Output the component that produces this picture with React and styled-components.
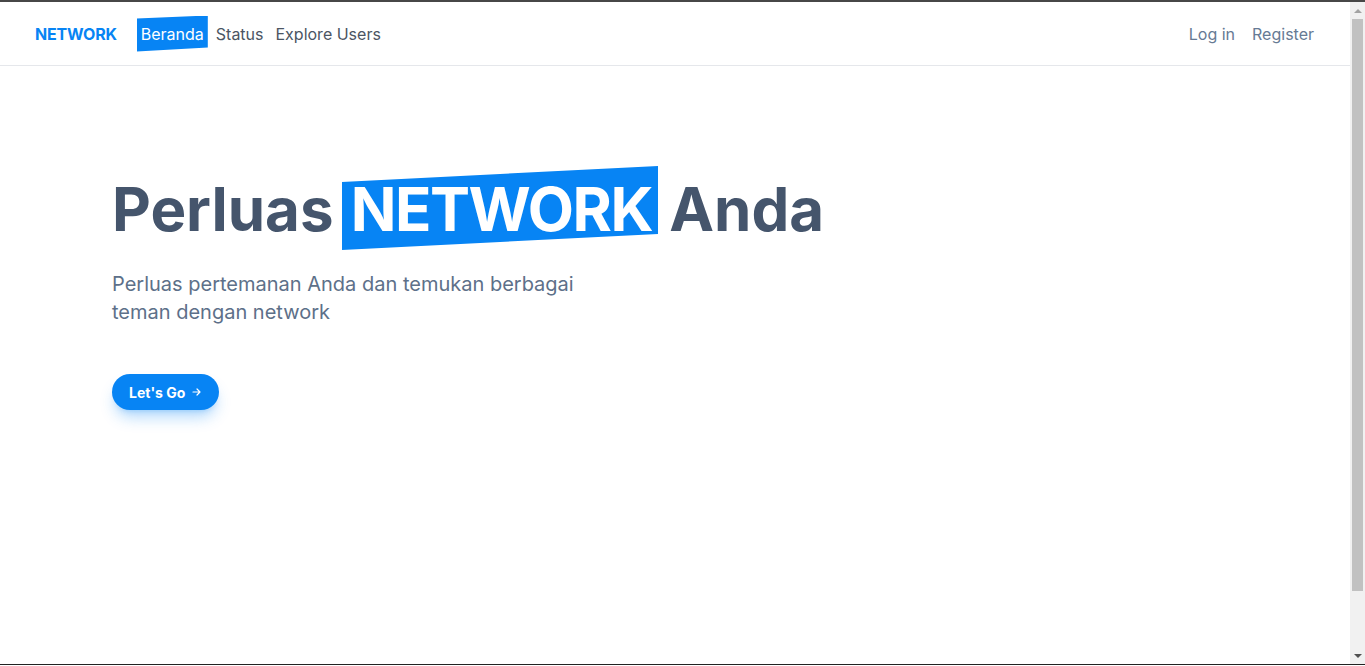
import React from "react";
import styled, { createGlobalStyle } from "styled-components";

const Global = createGlobalStyle`
  html, body { margin: 0; padding: 0; height: 100%; overflow: hidden; }
  body {
    font-family: Inter, "Noto Sans", "Liberation Sans", sans-serif;
    background: #ffffff;
    border-top: 2px solid #474747;
    -webkit-font-smoothing: antialiased;
  }
  #root { height: 100%; }
  * { box-sizing: border-box; }
`;

const BLUE = "#0784f4";

const Window = styled.div`
  display: flex;
  height: calc(100% - 1px);
  border-bottom: 1px solid #222;
`;

const Page = styled.div`
  flex: 1;
  min-width: 0;
  display: flex;
  flex-direction: column;
`;

const Nav = styled.nav`
  height: 64px;
  border-bottom: 1px solid #e5e7eb;
  display: flex;
  align-items: center;
  justify-content: space-between;
  padding: 0 32px 0 35px;
`;

const Left = styled.div`
  display: flex;
  align-items: center;
`;

const Logo = styled.a`
  font-weight: 700;
  font-size: 16px;
  color: ${BLUE};
  text-decoration: none;
  margin-right: 20px;
  letter-spacing: -0.2px;
`;

const Links = styled.div`
  display: flex;
  align-items: center;
  gap: 4px;
`;

const NavLink = styled.a`
  font-size: 16px;
  line-height: 24px;
  padding: 6px 4px;
  text-decoration: none;
  color: ${(p) => (p.$active ? "#ffffff" : p.$muted ? "#667a94" : "#4b5563")};
  background: ${(p) => (p.$active ? BLUE : "transparent")};
  clip-path: ${(p) =>
    p.$active ? "polygon(0 8%, 100% 0, 100% 89%, 0 100%)" : "none"};
`;

const Right = styled.div`
  display: flex;
  align-items: center;
  gap: 9px;
`;

const Hero = styled.main`
  flex: 1;
  padding: 100px 112px 0;
  display: flex;
  flex-direction: column;
  align-items: flex-start;
`;

const Title = styled.h1`
  margin: 0;
  font-size: 60px;
  line-height: 1;
  font-weight: 700;
  color: #45556c;
  letter-spacing: 0;
`;

const Highlight = styled.span`
  display: inline-block;
  background: ${BLUE};
  color: #ffffff;
  letter-spacing: -1.5px;
  padding: 13px 6px 11px 9px;
  margin: 0 -3px 0 -6px;
  clip-path: polygon(0 19%, 100% 0, 100% 81%, 0 100%);
`;

const Subtitle = styled.p`
  margin: 20px 0 0;
  max-width: 512px;
  font-size: 20px;
  line-height: 28px;
  color: #5d7089;
`;

const Button = styled.button`
  margin-top: 48px;
  height: 36px;
  padding: 0 18px 0 17px;
  border: none;
  border-radius: 999px;
  background: ${BLUE};
  color: #ffffff;
  font-family: inherit;
  font-size: 14px;
  font-weight: 700;
  display: flex;
  align-items: center;
  gap: 7px;
  box-shadow: 0 10px 15px -3px rgba(7, 132, 244, 0.3),
    0 4px 6px -4px rgba(7, 132, 244, 0.3);
  cursor: pointer;
`;

const Arrow = () => (
  <svg width="9" height="8" viewBox="0 0 9 8" fill="none" stroke="currentColor" strokeWidth="1.2" strokeLinecap="round" strokeLinejoin="round">
    <path d="M1 4h7M5 1l3 3-3 3" />
  </svg>
);

const Scrollbar = styled.div`
  width: 15px;
  flex: none;
  background: #f1f1f1;
  display: flex;
  flex-direction: column;
  align-items: center;
`;

const ScrollButton = styled.div`
  height: 17px;
  width: 100%;
  display: flex;
  align-items: center;
  justify-content: center;
  color: ${(p) => (p.$dim ? "#a3a3a3" : "#505050")};
`;

const Track = styled.div`
  flex: 1;
  width: 100%;
  padding: 0 2px;
`;

const Thumb = styled.div`
  height: 572px;
  background: #c1c1c1;
`;

const Tri = ({ down }) => (
  <svg width="8" height="4" viewBox="0 0 8 4" fill="currentColor">
    <path d={down ? "M0 0h8L4 4z" : "M4 0l4 4H0z"} />
  </svg>
);

export default function App() {
  return (
    <>
      <Global />
      <Window>
        <Page>
          <Nav>
            <Left>
              <Logo href="#">NETWORK</Logo>
              <Links>
                <NavLink href="#" $active>Beranda</NavLink>
                <NavLink href="#">Status</NavLink>
                <NavLink href="#">Explore Users</NavLink>
              </Links>
            </Left>
            <Right>
              <NavLink href="#" $muted>Log in</NavLink>
              <NavLink href="#" $muted>Register</NavLink>
            </Right>
          </Nav>
          <Hero>
            <Title>
              Perluas <Highlight>NETWORK</Highlight> Anda
            </Title>
            <Subtitle>
              Perluas pertemanan Anda dan temukan berbagai teman dengan network
            </Subtitle>
            <Button>
              Let's Go <Arrow />
            </Button>
          </Hero>
        </Page>
        <Scrollbar>
          <ScrollButton $dim><Tri /></ScrollButton>
          <Track>
            <Thumb />
          </Track>
          <ScrollButton><Tri down /></ScrollButton>
        </Scrollbar>
      </Window>
    </>
  );
}
